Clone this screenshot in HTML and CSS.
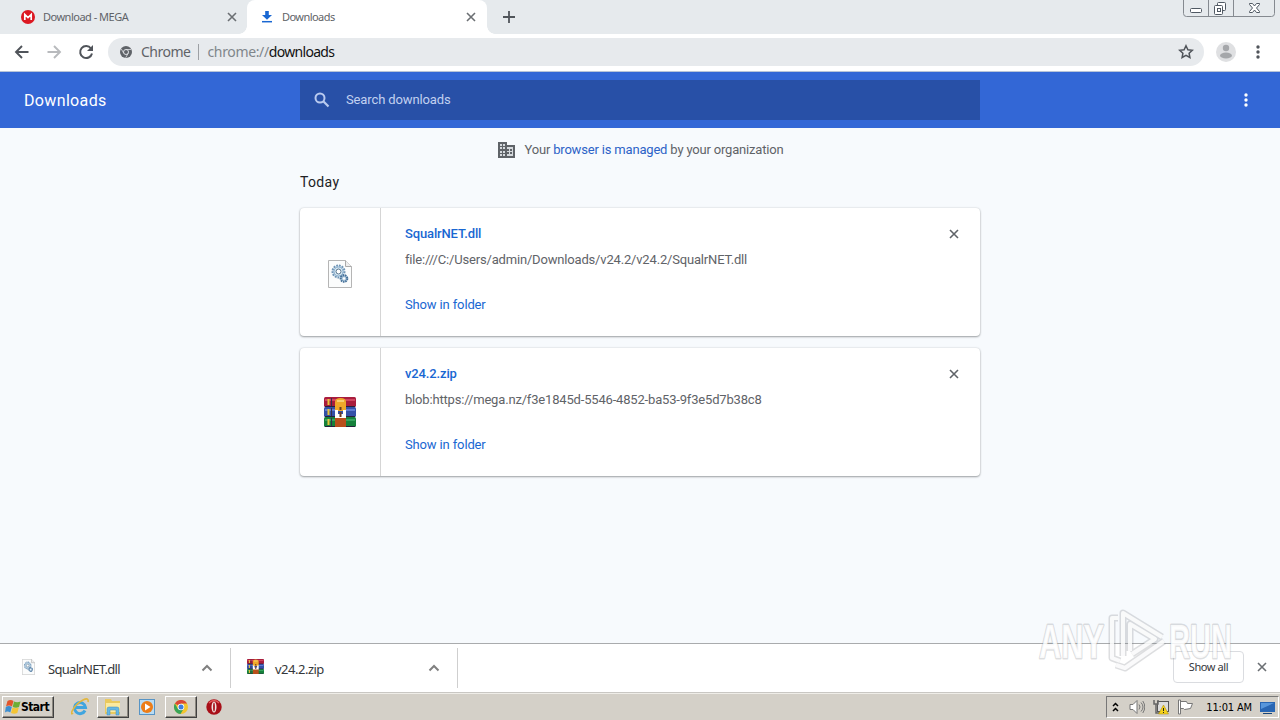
FILE: index.html
```html
<!DOCTYPE html>
<html lang="en">
<head>
    <meta charset="UTF-8">
    <title>Downloads</title>
    <link rel="stylesheet" href="styles.css">
</head>
<body>
    <!-- shared icons -->
    <svg class="defs" width="0" height="0">
        <symbol id="close" viewBox="0 0 10 10"><path d="M1 1l8 8M9 1L1 9" fill="none" stroke="currentColor" stroke-width="1.6"/></symbol>
        <symbol id="dots" viewBox="0 0 4 14"><circle cx="2" cy="2" r="1.7"/><circle cx="2" cy="7" r="1.7"/><circle cx="2" cy="12" r="1.7"/></symbol>
        <symbol id="chevron" viewBox="0 0 12 8"><path d="M1.5 6.5L6 2l4.5 4.5" fill="none" stroke="#808080" stroke-width="2"/></symbol>
        <symbol id="dll" viewBox="0 0 24 28">
            <path d="M.5.5h17l6 6v21H.5z" fill="#fbfcfc" stroke="#b5b5b5"/>
            <path d="M17.5.5v6h6" fill="#eee" stroke="#aaa"/>
            <circle cx="10.5" cy="11.5" r="6" fill="#d6e7f3" stroke="#6f94b5" stroke-width="2" stroke-dasharray="1.8 1"/>
            <circle cx="10.5" cy="11.5" r="4.5" fill="#dcebf5" stroke="#86abca"/>
            <circle cx="10.5" cy="11.5" r="2.5" fill="#fff" stroke="#55738d"/>
            <circle cx="16" cy="18.5" r="3.3" fill="#a8c4da" stroke="#446f98" stroke-width="2" stroke-dasharray="1.5 .8"/>
            <circle cx="16" cy="18.5" r="1.2" fill="#fff"/>
        </symbol>
        <symbol id="rar" viewBox="0 0 32 30">
            <rect y="0" width="32" height="10" rx="1.5" fill="#a91d3d"/>
            <rect y="10" width="32" height="10" rx="1.5" fill="#3451a8"/>
            <rect y="20" width="32" height="10" rx="1.5" fill="#16813b"/>
            <path d="M1 3h30" stroke="#d04560" stroke-width="2"/>
            <path d="M1 13h30" stroke="#5f7bd2" stroke-width="2"/>
            <path d="M1 23h30" stroke="#36a35d" stroke-width="2"/>
            <path d="M1 9.5h30M1 19.5h30M1 29.5h30" stroke="#26213b"/>
            <path d="M4.500 2v6M4.500 12v6M4.500 22v6" stroke="#e9c43b" stroke-width="2"/>
            <path d="M7.500 1v8M7.500 11v8M7.500 21v8" stroke="#35304a"/>
            <path d="M11 20h11v10H11z" fill="#b94f1b"/>
            <path d="M11 14V5q0-4 5.500-4T22 5v9z" fill="#efa82a"/>
            <path d="M13 4h7" stroke="#f8cf70" stroke-width="2"/>
            <path d="M11 13h3v4h5v-4h3v8H11z" fill="#fff"/>
            <path d="M16.500 10v3M16.500 15v5" stroke="#6b3a20" stroke-width="2"/>
        </symbol>
    </svg>

    <div class="tabstrip">
        <div class="tab">
            <svg class="favicon" width="14" height="14" viewBox="0 0 14 14"><circle cx="7" cy="7" r="7" fill="#dc1822"/><path d="M3.8 10V4.5L7 7.6l3.2-3.1V10" fill="none" stroke="#fff" stroke-width="1.7"/></svg>
            <span class="tab-title mega">Download - MEGA</span>
            <svg class="tab-close" width="10" height="10"><use href="#close"/></svg>
        </div>
        <div class="tab active">
            <svg class="favicon" width="14" height="14" viewBox="0 0 14 14"><path d="M5.2 1h3.600v4H12L7 9.700 2 5h3.200z" fill="#1967d2"/><path d="M2 11.700h10" stroke="#1967d2" stroke-width="1.5"/></svg>
            <span class="tab-title">Downloads</span>
            <svg class="tab-close" width="10" height="10"><use href="#close"/></svg>
        </div>
        <svg class="new-tab" width="12" height="12" viewBox="0 0 12 12"><path d="M6 0v12M0 6h12" stroke="#50555a" stroke-width="1.8"/></svg>
        <svg class="window-controls" width="94" height="18" viewBox="0 0 94 18">
            <path d="M1.500 0v13.500q0 3 3 3h85q3 0 3-3V0M26.500 0v16M51.500 0v16" fill="none" stroke="#858a90"/>
            <g fill="#fff" stroke="#505963">
                <rect x="8.5" y="8.5" width="11" height="4" rx="1"/>
                <rect x="35.5" y="2.5" width="8" height="8" rx="1"/>
                <rect x="32.5" y="5.5" width="8" height="9" rx="1"/>
                <rect x="35.5" y="8.5" width="3" height="3"/>
                <path d="M67.500 3.500h3l2 2.500 2-2.500h3v1L74.500 8l3 3.500v1h-3l-2-2.500-2 2.500h-3v-1l3-3.500-3-3.500z"/>
            </g>
        </svg>
    </div>

    <div class="toolbar">
        <svg class="nav-icon" width="16" height="16" viewBox="0 0 16 16"><path d="M14.500 8H2.500M8 2L2 8l6 6" fill="none" stroke="#50545a" stroke-width="1.9"/></svg>
        <svg class="nav-icon" width="16" height="16" viewBox="0 0 16 16"><path d="M1.500 8h12M8 2l6 6-6 6" fill="none" stroke="#b8babd" stroke-width="1.9"/></svg>
        <svg class="nav-icon" width="16" height="16" viewBox="0 0 16 16"><path d="M13 4.500A6 6 0 1 0 14 9.500" fill="none" stroke="#50545a" stroke-width="2"/><path d="M15 1v6H9z" fill="#50545a"/></svg>
        <div class="omnibox">
            <svg width="12" height="12" viewBox="0 0 12 12"><circle cx="6" cy="6" r="6" fill="#5f6368"/><circle cx="6" cy="6" r="2.5" fill="#5f6368" stroke="#dfe1e5"/><path d="M6 3.500h5M3.800 7.300L1.300 3M8.200 7.300L5.700 11.700" stroke="#dfe1e5" stroke-width=".8"/></svg>
            <span class="scheme-name">Chrome</span>
            <span class="separator"></span>
            <span class="url">chrome://<b>downloads</b></span>
            <svg class="star" width="16" height="16" viewBox="0 0 16 16"><path d="M8 1.700l1.900 4 4.400.5-3.200 3 .8 4.300L8 11.400l-3.900 2.100.8-4.300-3.200-3 4.400-.5z" fill="none" stroke="#50545a" stroke-width="1.5"/></svg>
        </div>
        <svg class="avatar" width="20" height="20" viewBox="0 0 20 20"><circle cx="10" cy="10" r="10" fill="#dfe0e2"/><circle cx="10" cy="6" r="3.200" fill="#a5a7aa"/><ellipse cx="10" cy="13.500" rx="6" ry="3" fill="#a5a7aa"/></svg>
        <svg class="browser-menu" width="4" height="14"><use href="#dots"/></svg>
    </div>

    <header class="header">
        <h1>Downloads</h1>
        <div class="search">
            <svg width="16" height="16" viewBox="0 0 16 16"><circle cx="6" cy="6" r="4.500" fill="none" stroke="#b9caef" stroke-width="2"/><path d="M9.300 9.300L14.500 14.500" stroke="#b9caef" stroke-width="2.200"/></svg>
            <span>Search downloads</span>
        </div>
        <svg class="page-menu" width="4" height="14"><use href="#dots"/></svg>
    </header>

    <main class="content">
        <div class="managed">
            <svg width="17" height="16" viewBox="0 0 17 16"><path d="M0 0h9v3h8v13H0z" fill="#5f6368"/><path d="M2 2h2v2H2zm3 0h2v2H5zM2 5h2v2H2zm3 0h2v2H5zM2 9h2v2H2zm3 0h2v2H5zM2 12h2v2H2zm3 0h2v2H5zM9 5h6v9H9v-2h2v-2H9V9h2V7H9z" fill="#d5d9dd"/><path d="M12 7h2v2h-2zm0 3h2v2h-2z" fill="#5f6368"/></svg>
            <span>Your <a>browser is managed</a> by your organization</span>
        </div>
        <h2>Today</h2>
        <div class="card">
            <div class="file-icon"><svg width="24" height="28"><use href="#dll"/></svg></div>
            <div class="details">
                <a class="name">SqualrNET.dll</a>
                <span class="path">file:///C:/Users/admin/Downloads/v24.2/v24.2/SqualrNET.dll</span>
                <a class="show">Show in folder</a>
            </div>
            <svg class="remove" width="10" height="10"><use href="#close"/></svg>
        </div>
        <div class="card">
            <div class="file-icon rar-icon"><svg width="32" height="30"><use href="#rar"/></svg></div>
            <div class="details">
                <a class="name">v24.2.zip</a>
                <span class="path">blob:https://mega.nz/f3e1845d-5546-4852-ba53-9f3e5d7b38c8</span>
                <a class="show">Show in folder</a>
            </div>
            <svg class="remove" width="10" height="10"><use href="#close"/></svg>
        </div>
    </main>

    <div class="shelf">
        <div class="shelf-item">
            <svg class="shelf-icon" width="13" height="16" viewBox="0 0 24 28" preserveAspectRatio="none"><use href="#dll" width="24" height="28"/></svg>
            <span>SqualrNET.dll</span>
            <svg class="chevron" width="12" height="8"><use href="#chevron"/></svg>
        </div>
        <div class="shelf-item second">
            <svg class="shelf-icon" width="17" height="15" viewBox="0 0 32 30" preserveAspectRatio="none"><use href="#rar" width="32" height="30"/></svg>
            <span>v24.2.zip</span>
            <svg class="chevron" width="12" height="8"><use href="#chevron"/></svg>
        </div>
        <button class="show-all">Show all</button>
        <svg class="shelf-close" width="10" height="10"><use href="#close"/></svg>
    </div>

    <div class="taskbar">
        <div class="task start">
            <svg width="16" height="16" viewBox="0 0 16 16"><path d="M2.500 2q3-2 6 0L7 7.500q-3-2-6 0z" fill="#e2552b"/><path d="M9 2.500q3 1.500 6.500 0L14 8q-3 1.500-6.300 0z" fill="#6dae35"/><path d="M.8 8q3-2 6 0L5.300 13.500q-3-2-5.300 0z" fill="#3c8ed0"/><path d="M7.500 8.500q3 1.500 6.300 0L12.300 14q-3 1.500-6.300 0z" fill="#f4c535"/></svg>
            <span>Start</span>
        </div>
        <div class="task ie">
            <svg width="18" height="18" viewBox="0 0 18 18"><path d="M14 12.500A5.500 5.500 0 1 1 14.500 9.500H5" fill="none" stroke="#40a5df" stroke-width="3"/><path d="M2 15C-2 19 2 7 12 2q6-3 5 2" fill="none" stroke="#e2b73e" stroke-width="1.600"/></svg>
        </div>
        <div class="task raised">
            <svg width="18" height="18" viewBox="0 0 18 18"><path d="M1 4V1h6l1 2h8v13H1z" fill="#eac95e"/><path d="M2 5h14v9H2z" fill="#fbeaa0"/><path d="M3 17v-6q0-2 2-2h8q2 0 2 2v6h-3v-5H6v5z" fill="#65b8e4" stroke="#4288b8" stroke-width=".5"/></svg>
        </div>
        <div class="task player">
            <svg width="16" height="16" viewBox="0 0 16 16"><rect x=".5" y=".5" width="15" height="15" fill="#b9dcf3" stroke="#5794c5"/><circle cx="8" cy="8" r="6" fill="#ed7d17"/><path d="M6 4.500v7L11.500 8z" fill="#fff"/></svg>
        </div>
        <div class="task raised">
            <svg width="14" height="14" viewBox="0 0 14 14"><circle cx="7" cy="7" r="7" fill="#f3c52e"/><path d="M7 7L.9 3.500A7 7 0 0 1 13.100 3.500H7z" fill="#d94638"/><path d="M.9 3.500A7 7 0 0 0 6.500 14L9.500 9 4 9z" fill="#38a458"/><circle cx="7" cy="7" r="3.300" fill="#fff"/><circle cx="7" cy="7" r="2.500" fill="#3e7de0"/></svg>
        </div>
        <div class="task opera">
            <svg width="16" height="16" viewBox="0 0 16 16"><circle cx="8" cy="8" r="7.700" fill="#a80f18"/><path d="M3 4q5-5 10 0" fill="none" stroke="#e45a5a" stroke-width="1.500"/><ellipse cx="8" cy="8" rx="2.500" ry="5.500" fill="#f1e5e2"/><ellipse cx="8" cy="8" rx=".9" ry="4.500" fill="#a80f18"/></svg>
        </div>
        <div class="tray">
            <svg width="7" height="10" viewBox="0 0 7 10"><path d="M1 4l2.500-2.500L6 4M1 9l2.500-2.500L6 9" fill="none" stroke="#000" stroke-width="1.500"/></svg>
            <svg class="volume" width="16" height="16" viewBox="0 0 16 16"><path d="M1 5.500h3L8 1.500v13l-4-4H1z" fill="#fff" stroke="#777"/><path d="M10 5.500q2 2.500 0 5M12 3.500q4 4.500 0 9M13.800 2q4 6 0 12" fill="none" stroke="#777"/></svg>
            <svg class="network" width="16" height="16" viewBox="0 0 16 16"><rect x="4.500" y="2.500" width="11" height="10" fill="#ddd" stroke="#555"/><path d="M1 1v4h4V1M3 5v9h4" fill="none" stroke="#666" stroke-width="1.500"/><path d="M10.500 6l5 9h-10z" fill="#f5d21b" stroke="#a98700" stroke-width=".5"/><path d="M10.500 9v3M10.500 13v1" stroke="#222"/></svg>
            <svg class="flag" width="16" height="16" viewBox="0 0 16 16"><path d="M1.500 1v14h2V1zM3.500 2.500h6l1 2h5l-2 5-6 1-1-1h-3z" fill="#fff" stroke="#777"/></svg>
            <span class="clock">11:01 AM</span>
            <svg class="desktop" width="15" height="13" viewBox="0 0 15 13"><path d="M0 1h15v10H0z" fill="#2966b3"/><path d="M1 2h13L1 8z" fill="#5796db"/><path d="M3 12.500h9" stroke="#174579"/></svg>
        </div>
    </div>

    <!-- translucent logo over the page corner -->
    <svg class="watermark" width="210" height="76" viewBox="0 0 210 76">
        <g class="mark-text">
            <text x="6" y="54" textLength="65" lengthAdjust="spacingAndGlyphs">ANY</text>
            <text x="136" y="54" textLength="63" lengthAdjust="spacingAndGlyphs">RUN</text>
        </g>
        <path class="mark-shadow" d="M85 14h-6v40l8 3M90 52V9l39 24M131 37L92 64l-9-3M97 47V20l25 15-23 15"/>
        <path class="mark-line" d="M85 14h-6v40l8 3M90 52V9l39 24M131 37L92 64l-9-3M97 47V20l25 15-23 15"/>
    </svg>
</body>
</html>
```
FILE: styles.css
```css
* {
    box-sizing: border-box;
}
body {
    margin: 0;
    width: 1280px;
    height: 720px;
    overflow: hidden;
    display: flex;
    flex-direction: column;
    position: relative;
    background: #f7fafd;
    font-family: Roboto, sans-serif;
    font-size: 13px;
    color: #5f6368;
}
svg {
    display: block;
    flex-shrink: 0;
}
.defs {
    position: absolute;
}
.tabstrip {
    height: 34px;
    background: #e6eaed;
    display: flex;
    align-items: center;
    flex-shrink: 0;
    font-family: "Noto Sans", sans-serif;
    font-size: 11px;
}
.tab {
    width: 247px;
    height: 34px;
    padding: 0 10px 0 21px;
    display: flex;
    align-items: center;
}
.tab.active {
    width: 240px;
    padding: 0 11px 0 13px;
    background: #fff;
    border-radius: 8px 8px 0 0;
    position: relative;
}
.tab.active::before, .tab.active::after {
    content: "";
    position: absolute;
    bottom: 0;
    width: 8px;
    height: 8px;
}
.tab.active::before {
    left: -8px;
    background: radial-gradient(circle at 0 0, transparent 7.5px, #fff 8px);
}
.tab.active::after {
    right: -8px;
    background: radial-gradient(circle at 100% 0, transparent 7.5px, #fff 8px);
}
.tab-title {
    margin-left: 8px;
    padding-bottom: 2px;
    letter-spacing: -0.5px;
}
.tab.active .tab-title {
    letter-spacing: -0.55px;
}
.tab-close {
    margin-left: auto;
    color: #6b6f73;
}
.new-tab {
    margin-left: 16px;
}
.window-controls {
    align-self: flex-start;
    margin-left: auto;
    margin-right: 4px;
}
.toolbar {
    height: 38px;
    background: #fff;
    border-bottom: 1px solid #b8c4d8;
    display: flex;
    align-items: center;
    padding: 0 20px 1px 14px;
    flex-shrink: 0;
}
.nav-icon {
    margin-right: 16px;
}
.omnibox {
    width: 1096px;
    height: 28px;
    margin-left: -2px;
    padding: 0 10px 0 12px;
    border-radius: 14px;
    background: #e7eaed;
    display: flex;
    align-items: center;
    font-family: "Noto Sans", sans-serif;
    font-size: 14px;
}
.scheme-name {
    margin-left: 9px;
    padding-bottom: 2px;
    letter-spacing: -0.5px;
}
.separator {
    width: 1px;
    height: 16px;
    margin: 0 8px;
    background: #9da0a4;
}
.url {
    padding-bottom: 2px;
    color: #80868b;
    letter-spacing: -0.35px;
}
.url b {
    color: #111;
    font-weight: normal;
    letter-spacing: -0.7px;
}
.star {
    margin-left: auto;
}
.avatar {
    margin-left: 12px;
}
.browser-menu {
    margin-left: auto;
    fill: #50545a;
}
.header {
    height: 56px;
    background: #3367d6;
    display: flex;
    align-items: center;
    padding: 0 32px 0 24px;
    flex-shrink: 0;
}
h1 {
    width: 276px;
    margin: 0;
    color: #fff;
    font-size: 16px;
    font-weight: 400;
    letter-spacing: 0.35px;
}
.search {
    width: 680px;
    height: 40px;
    background: #2850a7;
    display: flex;
    align-items: center;
    padding-left: 14px;
    gap: 16px;
    color: #c2d1f0;
    letter-spacing: -0.12px;
}
.search span {
    padding-bottom: 2px;
}
.page-menu {
    margin-left: auto;
    fill: #fff;
}
.content {
    width: 680px;
    margin: 0 auto;
    flex: 1;
}
.managed {
    display: flex;
    justify-content: center;
    align-items: center;
    gap: 9px;
    height: 44px;
    padding-left: 2px;
    letter-spacing: -0.18px;
}
.managed span {
    padding-bottom: 2px;
}
a {
    color: #2c62c7;
}
h2 {
    margin: 0 0 12px;
    height: 24px;
    line-height: 21px;
    font-size: 14px;
    font-weight: 400;
    color: #202124;
    letter-spacing: 0.35px;
}
.card {
    display: flex;
    height: 128px;
    margin-bottom: 12px;
    background: #fff;
    border-radius: 4px;
    box-shadow: 0 1px 2px rgba(60, 64, 67, 0.45), 0 0 2px rgba(60, 64, 67, 0.2);
}
.file-icon {
    width: 81px;
    border-right: 1px solid #d5d5d5;
    display: flex;
    align-items: center;
    justify-content: center;
    padding-top: 4px;
}
.rar-icon {
    padding-top: 0;
}
.details {
    display: flex;
    flex-direction: column;
    align-items: flex-start;
    padding: 16px 0 0 24px;
    line-height: 20px;
    letter-spacing: -0.14px;
}
.name {
    font-weight: 500;
    color: #1967d2;
}
.path {
    margin-top: 6px;
    letter-spacing: -0.175px;
}
.show {
    margin-top: 25px;
    color: #1967d2;
}
.remove {
    margin: 21px 21px 0 auto;
}
.shelf {
    height: 50px;
    background: #fff;
    border-top: 1px solid #a9abad;
    border-bottom: 1px solid #c9c7c3;
    display: flex;
    align-items: center;
    flex-shrink: 0;
    font-family: "Noto Sans", sans-serif;
    font-size: 13px;
    color: #35383b;
}
.shelf-item {
    width: 231px;
    height: 40px;
    border-right: 1px solid #cfcfcf;
    display: flex;
    align-items: center;
    padding: 0 17px 0 22px;
}
.second {
    width: 227px;
    padding: 0 17px 0 16px;
}
.shelf-item span {
    margin-left: 13px;
    padding-top: 1px;
    letter-spacing: -0.7px;
}
.second span {
    margin-left: 11px;
    letter-spacing: -0.5px;
}
.shelf-icon {
    margin-bottom: 3px;
}
.chevron {
    margin-left: auto;
}
.show-all {
    width: 71px;
    height: 32px;
    margin-left: auto;
    margin-bottom: 2px;
    padding: 0 6px 2px;
    background: #fff;
    border: 1px solid #dadce0;
    border-radius: 4px;
    font: 11px "Noto Sans", sans-serif;
    letter-spacing: -0.4px;
    color: #35383b;
}
.shelf-close {
    margin: 0 13px 2px;
    color: #6b6f73;
}
.taskbar {
    height: 27px;
    background: #d4d0c8;
    border-top: 1px solid #efede8;
    display: flex;
    align-items: center;
    padding-left: 2px;
    flex-shrink: 0;
}
.task {
    height: 22px;
    display: flex;
    align-items: center;
    justify-content: center;
}
.start, .raised {
    border: 1px solid;
    border-color: #fff #404040 #404040 #fff;
    box-shadow: inset -1px -1px #8c8880;
}
.start {
    width: 52px;
    padding-right: 2px;
    color: #000;
    font: bold 12px "DejaVu Sans Condensed", "DejaVu Sans", sans-serif;
    letter-spacing: -0.5px;
}
.ie {
    width: 43px;
    padding-left: 8px;
}
.raised {
    width: 32px;
}
.player {
    width: 36px;
}
.opera {
    width: 34px;
}
.tray {
    width: 173px;
    height: 22px;
    margin-left: auto;
    margin-right: 1px;
    padding: 0 3px 0 5px;
    border: 1px solid;
    border-color: #777 #fff #fff #777;
    display: flex;
    align-items: center;
    color: #000;
}
.volume {
    margin-left: 10px;
}
.network, .flag {
    margin-left: 8px;
}
.clock {
    margin-left: auto;
    margin-right: 8px;
    font: 11px "DejaVu Sans Condensed", "DejaVu Sans", sans-serif;
    letter-spacing: -0.15px;
}
.watermark {
    position: absolute;
    left: 1033px;
    top: 604px;
    overflow: visible;
}
.mark-text {
    font: bold 48px "Liberation Sans", sans-serif;
    fill: rgba(255, 255, 255, 0.85);
    stroke: rgba(120, 125, 130, 0.25);
    stroke-width: 3px;
    stroke-linejoin: round;
    paint-order: stroke;
}
.mark-shadow, .mark-line {
    fill: none;
    stroke: rgba(120, 125, 130, 0.25);
    stroke-width: 7px;
    stroke-linejoin: round;
}
.mark-line {
    stroke: rgba(255, 255, 255, 0.85);
    stroke-width: 4px;
}
```
